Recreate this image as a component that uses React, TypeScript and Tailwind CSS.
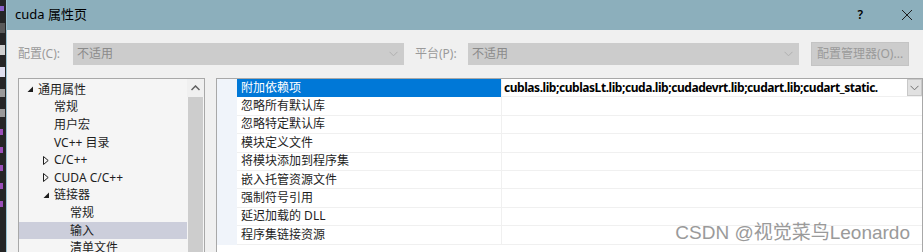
import React from 'react';

interface TreeItem {
  label: string;
  level: number;
  arrow?: 'open' | 'closed';
  selected?: boolean;
}

const treeItems: TreeItem[] = [
  { label: '通用属性', level: 0, arrow: 'open' },
  { label: '常规', level: 1 },
  { label: '用户宏', level: 1 },
  { label: 'VC++ 目录', level: 1 },
  { label: 'C/C++', level: 1, arrow: 'closed' },
  { label: 'CUDA C/C++', level: 1, arrow: 'closed' },
  { label: '链接器', level: 1, arrow: 'open' },
  { label: '常规', level: 2 },
  { label: '输入', level: 2, selected: true },
  { label: '清单文件', level: 2 },
];

const props = [
  '附加依赖项',
  '忽略所有默认库',
  '忽略特定默认库',
  '模块定义文件',
  '将模块添加到程序集',
  '嵌入托管资源文件',
  '强制符号引用',
  '延迟加载的 DLL',
  '程序集链接资源',
];

const font = { fontFamily: '"Noto Sans", "Noto Sans CJK SC", sans-serif' };

function Chevron({ color = '#b0b0b0' }: { color?: string }) {
  return (
    <svg width="9" height="6" viewBox="0 0 9 6">
      <path d="M0.5 0.8 L4.5 4.8 L8.5 0.8" fill="none" stroke={color} strokeWidth="1" />
    </svg>
  );
}

function Arrow({ kind }: { kind: 'open' | 'closed' }) {
  if (kind === 'open') {
    return (
      <svg width="7" height="7" viewBox="0 0 7 7">
        <path d="M6 0.5 L6 6 L0.5 6 Z" fill="#1e1e1e" />
      </svg>
    );
  }
  return (
    <svg width="6" height="9" viewBox="0 0 6 9">
      <path d="M0.5 0.5 L5.2 4.5 L0.5 8.5 Z" fill="none" stroke="#1e1e1e" strokeWidth="1" />
    </svg>
  );
}

export default function App() {
  return (
    <div className="flex w-[923px] h-[252px] overflow-hidden text-[12px]" style={font}>
      {/* background editor peeking at the left */}
      <div className="w-[6px] h-full bg-[#252526] flex flex-col items-start pt-[6px] gap-[12px]">
        <div className="w-[4px] h-[5px] bg-[#8a5fc9]" />
        <div className="w-[5px] h-[10px] bg-[#5a5a5a]" />
        <div className="w-[5px] h-[10px] bg-[#d0d0d0]" />
        <div className="w-[5px] h-[10px] bg-[#e0e0f0]" />
        <div className="w-[5px] h-[8px] bg-[#9a9a9a]" />
        <div className="w-[5px] h-[8px] bg-[#9a9a9a]" />
        <div className="w-[3px] h-[6px] bg-[#9a4fb9]" />
        <div className="w-[3px] h-[6px] bg-[#9a4fb9]" />
        <div className="w-[3px] h-[6px] bg-[#9a4fb9]" />
        <div className="w-[3px] h-[6px] bg-[#9a4fb9]" />
        <div className="w-[3px] h-[6px] bg-[#9a4fb9]" />
      </div>
      <div className="w-[1px] h-full bg-[#9cc4d4]" />

      <div className="flex-1 flex flex-col bg-[#f0f0f0]">
        {/* title bar */}
        <div className="h-[30px] bg-[#8cafbc] flex items-center pl-[8px] pr-[6px] text-[13px] text-black shrink-0">
          <span>cuda 属性页</span>
          <span className="ml-auto mr-[38px] text-[12px] font-semibold">?</span>
          <svg width="12" height="12" viewBox="0 0 12 12" className="mr-[4px]">
            <path d="M1 1 L11 11 M11 1 L1 11" stroke="#1e1e1e" strokeWidth="1" />
          </svg>
        </div>

        {/* config row */}
        <div className="flex items-center h-[24px] mt-[12px] pl-[11px] text-[#9a9a9a]">
          <span className="w-[55px]">配置(C):</span>
          <div className="w-[331px] h-[22px] bg-[#cccccc] flex items-center pl-[4px] pr-[6px]">
            <span className="text-[#8a8a8a]">不适用</span>
            <span className="ml-auto"><Chevron /></span>
          </div>
          <span className="ml-[11px] w-[53px]">平台(P):</span>
          <div className="w-[331px] h-[22px] bg-[#cccccc] flex items-center pl-[4px] pr-[6px]">
            <span className="text-[#8a8a8a]">不适用</span>
            <span className="ml-auto"><Chevron /></span>
          </div>
          <div className="ml-[12px] w-[98px] h-[24px] bg-[#cccccc] border border-[#c4c4c4] flex items-center justify-center text-[#9a9a9a]">
            配置管理器(O)...
          </div>
        </div>

        {/* panes */}
        <div className="flex flex-1 mt-[12px] pl-[11px] min-h-0">
          {/* tree */}
          <div className="w-[187px] border-l border-t border-r border-[#a8a8a8] bg-[#f5f5f5] flex">
            <div className="flex-1 pt-[2px]">
              {treeItems.map((item, i) => (
                <div
                  key={i}
                  className={`h-[17.6px] flex items-center text-[#1e1e1e] ${item.selected ? 'bg-[#cccedb]' : ''}`}
                >
                  <div className="flex items-center shrink-0" style={{ paddingLeft: 8 + item.level * 16 }}>
                    <span className="w-[11px] flex items-center">
                      {item.arrow ? <Arrow kind={item.arrow} /> : null}
                    </span>
                  </div>
                  <span className="leading-none">{item.label}</span>
                </div>
              ))}
            </div>
            <div className="w-[17px] flex flex-col">
              <div className="h-[18px] bg-[#f0f0f0] flex items-center justify-center">
                <svg width="9" height="6" viewBox="0 0 9 6">
                  <path d="M0.5 5 L4.5 1 L8.5 5" fill="none" stroke="#606060" strokeWidth="1.5" />
                </svg>
              </div>
              <div className="flex-1 bg-[#cdcdcd] mx-[1px]" />
            </div>
          </div>

          {/* property grid */}
          <div className="ml-[11px] w-[707px] border-l border-t border-r border-[#a8a8a8] bg-white flex flex-col">
            {props.map((name, i) => (
              <div key={i} className="flex h-[18.4px] shrink-0">
                <div className="w-[20px] bg-[#f0f4fa]" />
                <div
                  className={`w-[264px] flex items-center pl-[4px] border-b ${
                    i === 0 ? 'bg-[#0078d7] text-white border-[#0078d7]' : 'text-[#1e1e1e] border-[#f0f0f0]'
                  }`}
                >
                  {name}
                </div>
                <div className="flex-1 flex items-center border-b border-l border-[#f0f0f0] min-w-0">
                  {i === 0 ? (
                    <>
                      <span className="pl-[2px] font-bold text-black whitespace-nowrap overflow-hidden flex-1 tracking-[-0.45px]">
                        cublas.lib;cublasLt.lib;cuda.lib;cudadevrt.lib;cudart.lib;cudart_static.
                      </span>
                      <div className="w-[15px] h-[17px] bg-[#e1e1e1] border border-[#c8c8c8] flex items-center justify-center shrink-0">
                        <Chevron color="#707070" />
                      </div>
                    </>
                  ) : null}
                </div>
              </div>
            ))}
            <div className="flex-1 bg-white relative">
              <span
                className="absolute right-[12px] bottom-[5px] text-[19px] text-[#9a9a9a] whitespace-nowrap"
                style={{ fontFamily: '"Liberation Sans", "Noto Sans CJK SC", sans-serif' }}
              >
                CSDN @视觉菜鸟Leonardo
              </span>
            </div>
          </div>
        </div>
      </div>
    </div>
  );
}
